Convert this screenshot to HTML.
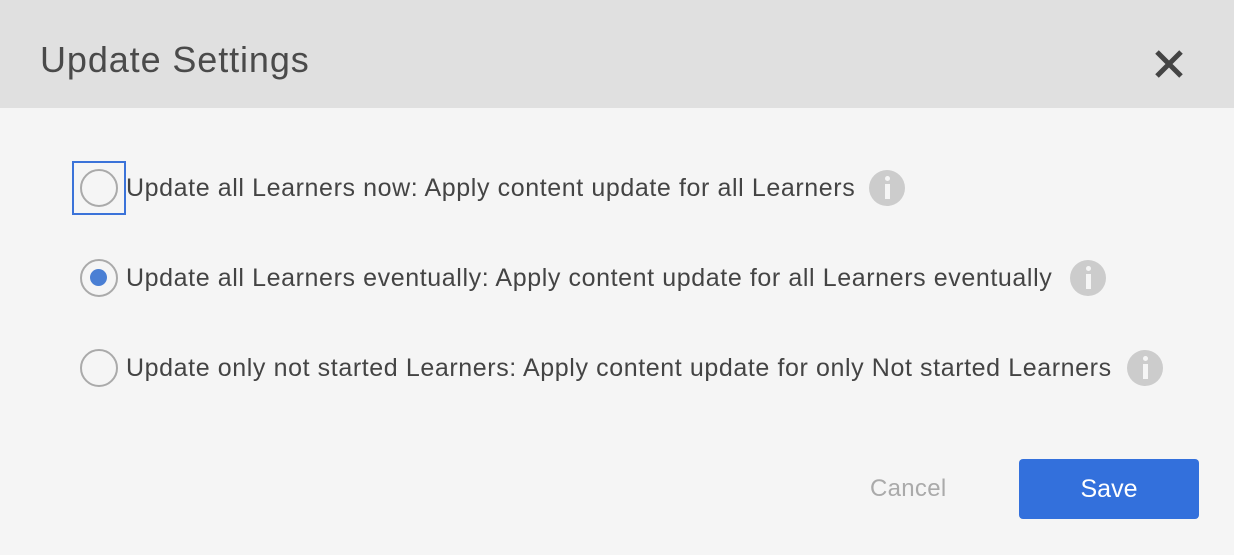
<!DOCTYPE html>
<html><head><style>
body{margin:0;width:1234px;height:555px;background:#f5f5f5;font-family:"Liberation Sans",sans-serif;position:relative;overflow:hidden;color:#444}
.hdr{position:absolute;left:0;top:0;width:1234px;height:108px;background:#e0e0e0}
.title{position:absolute;left:40px;top:40px;font-size:36px;letter-spacing:0.9px;color:#4a4a4a;line-height:40px}
.x{position:absolute;left:1152px;top:47px}
.row{position:absolute;left:0;width:1234px;height:40px}
.radio{position:absolute;left:80px;top:-1px;width:38px;height:38px;border:2.5px solid #aaa;border-radius:50%;box-sizing:border-box;background:#f5f5f5}
.radio.on::after{content:"";position:absolute;left:8px;top:8px;width:17px;height:17px;border-radius:50%;background:#4a7fd4}
.lbl{position:absolute;left:126px;top:0;font-size:25px;letter-spacing:0.6px;line-height:36px;white-space:nowrap;color:#444}
.info{position:absolute;top:0;width:36px;height:36px;border-radius:50%;background:#ccc}
.info::before{content:"";position:absolute;left:16px;top:6px;width:5px;height:5px;border-radius:50%;background:#f5f5f5}
.info::after{content:"";position:absolute;left:16px;top:14px;width:5px;height:15px;background:#f5f5f5}
.focus{position:absolute;left:72px;top:161px;width:54px;height:54px;border:2px solid #3b73d9;box-sizing:border-box}
.cancel{position:absolute;left:870px;top:474px;font-size:24px;letter-spacing:0.3px;color:#aaa;line-height:30px}
.save{position:absolute;left:1019px;top:459px;width:180px;height:60px;background:#3370dc;border-radius:4px;color:#fff;font-size:25px;line-height:60px;text-align:center}
</style></head><body>
<div class="hdr"></div>
<div class="title">Update Settings</div>
<svg class="x" width="34" height="34" viewBox="0 0 34 34"><path d="M5 5L29 29M29 5L5 29" stroke="#444" stroke-width="5"/></svg>
<div class="focus"></div>
<div class="row" style="top:170px"><div class="radio"></div><div class="lbl">Update all Learners now: Apply content update for all Learners</div><div class="info" style="left:869px"></div></div>
<div class="row" style="top:260px"><div class="radio on"></div><div class="lbl">Update all Learners eventually: Apply content update for all Learners eventually</div><div class="info" style="left:1070px"></div></div>
<div class="row" style="top:350px"><div class="radio"></div><div class="lbl">Update only not started Learners: Apply content update for only Not started Learners</div><div class="info" style="left:1127px"></div></div>
<div class="cancel">Cancel</div>
<div class="save">Save</div>
</body></html>
